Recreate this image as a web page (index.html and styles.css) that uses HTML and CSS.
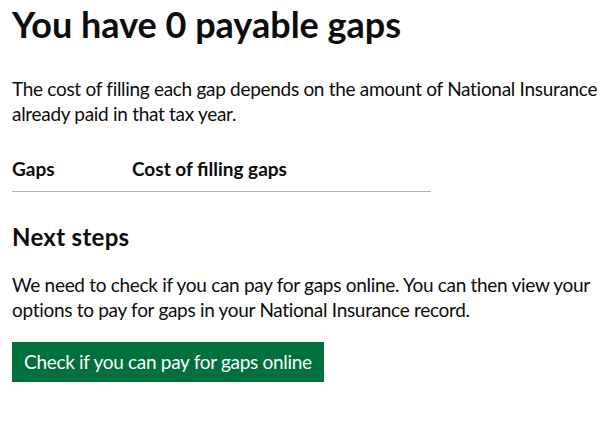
FILE: index.html
```html
<!DOCTYPE html>
<html lang="en">
<head>
<meta charset="utf-8">
<title>You have 0 payable gaps</title>
<link rel="stylesheet" href="styles.css">
</head>
<body>
<main class="main">
  <h1 class="heading-xl">You have 0 payable gaps</h1>
  <p class="body">The cost of filling each gap depends on the amount of National Insurance already paid in that tax year.</p>
  <table class="table">
    <thead>
      <tr>
        <th class="th th-gaps">Gaps</th>
        <th class="th th-cost">Cost of filling gaps</th>
      </tr>
    </thead>
  </table>
  <h2 class="heading-m">Next steps</h2>
  <p class="body">We need to check if you can pay for gaps online. You can then view your options to pay for gaps in your National Insurance record.</p>
  <a class="button" href="#">Check if you can pay for gaps online</a>
</main>
</body>
</html>
```

FILE: styles.css
```css
html, body {
  margin: 0;
  padding: 0;
  background: #ffffff;
}
body {
  font-family: Lato, "Liberation Sans", Arial, sans-serif;
  color: #0b0c0c;
}
.main {
  padding: 4px 6px 0 12px;
}
.heading-xl {
  font-size: 36px;
  line-height: 40px;
  font-weight: 700;
  margin: 0 0 32px;
}
.body {
  font-size: 19px;
  line-height: 25px;
  letter-spacing: -0.3px;
  margin: 0 0 20px;
}
.table {
  border-collapse: collapse;
  width: 419px;
  margin: 0 0 30px;
}
.th {
  font-size: 19px;
  line-height: 25px;
  font-weight: 700;
  text-align: left;
  padding: 10px 20px 10px 0;
  border-bottom: 1px solid #b1b4b6;
}
.th-gaps {
  width: 100px;
}
.heading-m {
  font-size: 24px;
  line-height: 30px;
  font-weight: 700;
  letter-spacing: 0.3px;
  margin: 0 0 20px;
}
.button {
  display: inline-block;
  box-sizing: border-box;
  height: 40px;
  padding: 8px 12px 7px;
  font-size: 19px;
  line-height: 23px;
  letter-spacing: -0.3px;
  color: #ffffff;
  background: #00703c;
  box-shadow: 0 2px 0 #002d18;
  text-decoration: none;
}
```
